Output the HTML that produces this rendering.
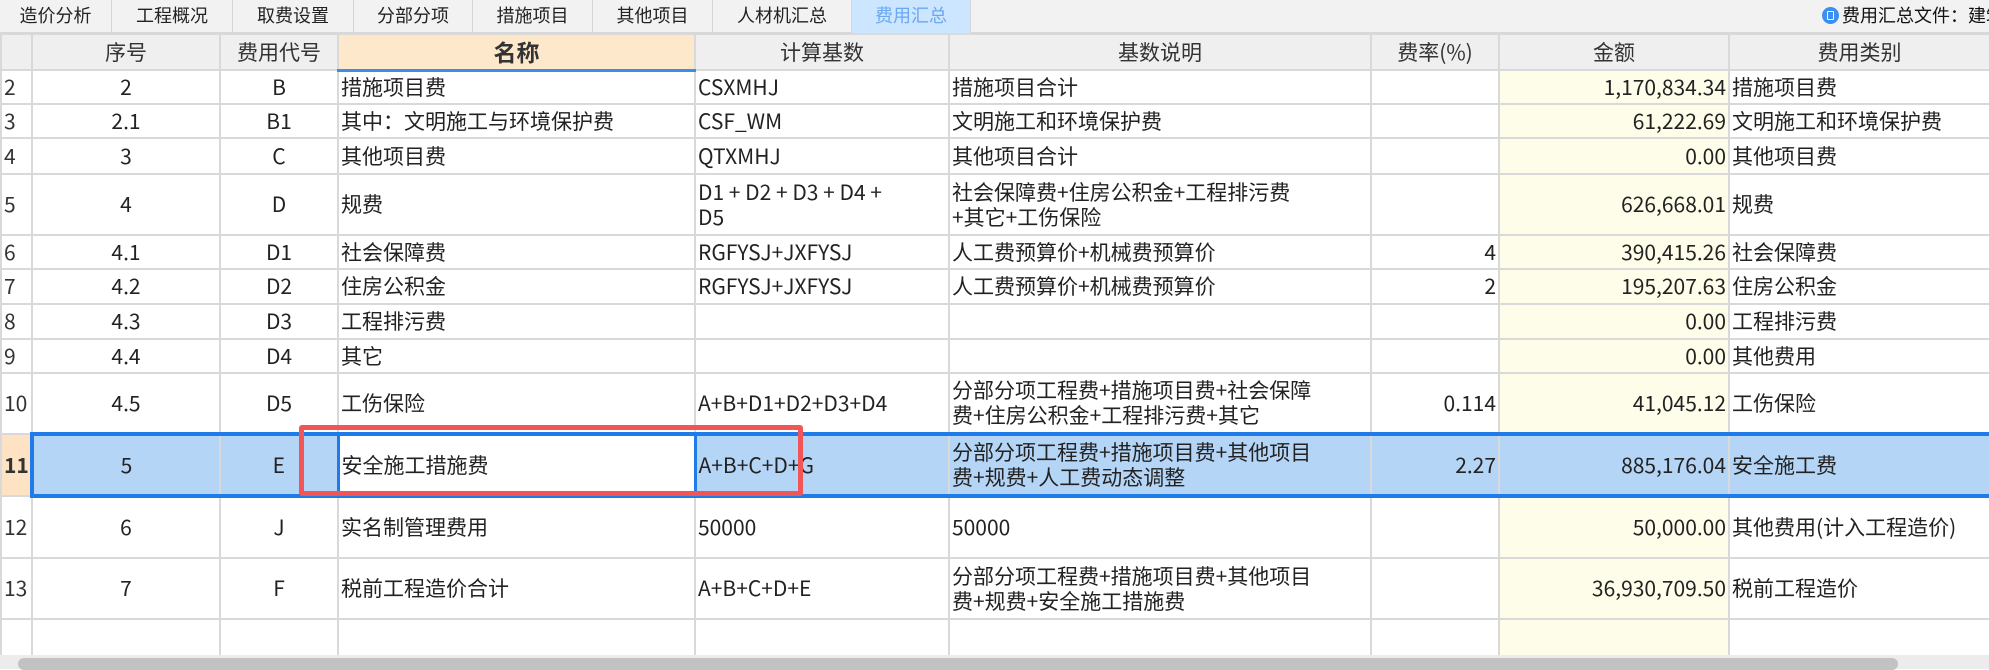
<!DOCTYPE html>
<html><head><meta charset="utf-8"><style>
*{margin:0;padding:0;box-sizing:border-box}
body{width:1989px;height:669px;overflow:hidden;background:#fff;font-family:"Liberation Sans","Noto Sans CJK SC",sans-serif;color:#333;position:relative}
.tabs{position:absolute;left:0;top:0;width:1989px;height:33px;background:#f2f2f2;border-bottom:1px solid #d8d8d8}
.tab{position:absolute;top:0;height:33px;border-right:1px solid #d6d6d6;font-size:18px;line-height:33px;text-align:center;color:#222}
.tab.act{background:#cce6ff;color:#6aa8f0}
.file{position:absolute;left:1822px;top:5px;font-size:18px;line-height:22px;white-space:nowrap;color:#111}
.file i{display:inline-block;width:17px;height:17px;border-radius:50%;background:#3b8ff0;vertical-align:-2px;margin-right:3px;position:relative}
.file i:after{content:"";position:absolute;left:5px;top:4px;width:5px;height:7px;border:1.5px solid #fff;border-radius:1px}
table{position:absolute;left:0;top:33px;border-collapse:collapse;table-layout:fixed;width:1989px}
td{border:2px solid #d9d9d9;font-size:21px;line-height:25px;padding:0 2px;vertical-align:middle;white-space:nowrap;overflow:hidden;font-family:"Noto Sans CJK SC",sans-serif;color:#222}
tr.h td{background:#efefef;text-align:center;color:#333}
tr.h td.nm{background:#fde8cc;font-weight:bold;border-bottom:3px solid #3a8ee6;font-size:23px}
td.c{text-align:center}
td.r{text-align:right}
td.y{background:#fdfdea}
td.rn{padding-left:2px;text-align:left;color:#333}
tr.sel td{background:#b5d5f7;border-top:4px solid #1e7be8;border-bottom:4px solid #1e7be8}
tr.sel td.rn{background:#fde3c3;font-weight:bold;border-top:2px solid #d9d9d9;border-bottom:2px solid #d9d9d9}
tr.sel td.ed{background:#fff;border-left:3px solid #1e7be8;border-right:3px solid #1e7be8}
tr.sel td.first{border-left:4px solid #1e7be8}
.red{position:absolute;left:299px;top:425px;width:504px;height:71px;border:5px solid #f25555;border-radius:3px}
.sb{position:absolute;left:0;top:655px;width:1989px;height:14px;background:#ececec}
.sb div{position:absolute;left:18px;top:3px;width:1880px;height:12px;background:#c2c2c2;border-radius:6px}
</style></head><body>
<div class="tabs">
<div class="tab" style="left:0;width:112px">造价分析</div>
<div class="tab" style="left:112px;width:121px">工程概况</div>
<div class="tab" style="left:233px;width:121px">取费设置</div>
<div class="tab" style="left:354px;width:119px">分部分项</div>
<div class="tab" style="left:473px;width:120px">措施项目</div>
<div class="tab" style="left:593px;width:120px">其他项目</div>
<div class="tab" style="left:713px;width:139px">人材机汇总</div>
<div class="tab act" style="left:852px;width:119px">费用汇总</div>
</div>
<div class="file"><i></i>费用汇总文件：建筑</div>
<table>
<colgroup><col style="width:31px"><col style="width:188px"><col style="width:118px"><col style="width:357px"><col style="width:254px"><col style="width:422px"><col style="width:128px"><col style="width:230px"><col style="width:261px"></colgroup>
<tr class="h" style="height:36px"><td></td><td>序号</td><td>费用代号</td><td class="nm">名称</td><td>计算基数</td><td>基数说明</td><td>费率(%)</td><td>金额</td><td>费用类别</td></tr>
<tr style="height:34px"><td class="rn">2</td><td class="c">2</td><td class="c">B</td><td>措施项目费</td><td>CSXMHJ</td><td>措施项目合计</td><td></td><td class="r y">1,170,834.34</td><td>措施项目费</td></tr>
<tr style="height:34px"><td class="rn">3</td><td class="c">2.1</td><td class="c">B1</td><td>其中：文明施工与环境保护费</td><td>CSF_WM</td><td>文明施工和环境保护费</td><td></td><td class="r y">61,222.69</td><td>文明施工和环境保护费</td></tr>
<tr style="height:36px"><td class="rn">4</td><td class="c">3</td><td class="c">C</td><td>其他项目费</td><td>QTXMHJ</td><td>其他项目合计</td><td></td><td class="r y">0.00</td><td>其他项目费</td></tr>
<tr style="height:61px"><td class="rn">5</td><td class="c">4</td><td class="c">D</td><td>规费</td><td>D1 + D2 + D3 + D4 +<br>D5</td><td>社会保障费+住房公积金+工程排污费<br>+其它+工伤保险</td><td></td><td class="r y">626,668.01</td><td>规费</td></tr>
<tr style="height:34px"><td class="rn">6</td><td class="c">4.1</td><td class="c">D1</td><td>社会保障费</td><td>RGFYSJ+JXFYSJ</td><td>人工费预算价+机械费预算价</td><td class="r">4</td><td class="r y">390,415.26</td><td>社会保障费</td></tr>
<tr style="height:35px"><td class="rn">7</td><td class="c">4.2</td><td class="c">D2</td><td>住房公积金</td><td>RGFYSJ+JXFYSJ</td><td>人工费预算价+机械费预算价</td><td class="r">2</td><td class="r y">195,207.63</td><td>住房公积金</td></tr>
<tr style="height:35px"><td class="rn">8</td><td class="c">4.3</td><td class="c">D3</td><td>工程排污费</td><td></td><td></td><td></td><td class="r y">0.00</td><td>工程排污费</td></tr>
<tr style="height:34px"><td class="rn">9</td><td class="c">4.4</td><td class="c">D4</td><td>其它</td><td></td><td></td><td></td><td class="r y">0.00</td><td>其他费用</td></tr>
<tr style="height:61px"><td class="rn">10</td><td class="c">4.5</td><td class="c">D5</td><td>工伤保险</td><td>A+B+D1+D2+D3+D4</td><td>分部分项工程费+措施项目费+社会保障<br>费+住房公积金+工程排污费+其它</td><td class="r">0.114</td><td class="r y">41,045.12</td><td>工伤保险</td></tr>
<tr class="sel" style="height:62px"><td class="rn">11</td><td class="c first">5</td><td class="c">E</td><td class="ed">安全施工措施费</td><td>A+B+C+D+G</td><td>分部分项工程费+措施项目费+其他项目<br>费+规费+人工费动态调整</td><td class="r">2.27</td><td class="r">885,176.04</td><td>安全施工费</td></tr>
<tr style="height:62px"><td class="rn">12</td><td class="c">6</td><td class="c">J</td><td>实名制管理费用</td><td>50000</td><td>50000</td><td></td><td class="r y">50,000.00</td><td>其他费用(计入工程造价)</td></tr>
<tr style="height:61px"><td class="rn">13</td><td class="c">7</td><td class="c">F</td><td>税前工程造价合计</td><td>A+B+C+D+E</td><td>分部分项工程费+措施项目费+其他项目<br>费+规费+安全施工措施费</td><td></td><td class="r y">36,930,709.50</td><td>税前工程造价</td></tr>
<tr style="height:40px"><td></td><td></td><td></td><td></td><td></td><td></td><td></td><td class="y"></td><td></td></tr>
</table>
<div class="red"></div>
<div class="sb"><div></div></div>
</body></html>
